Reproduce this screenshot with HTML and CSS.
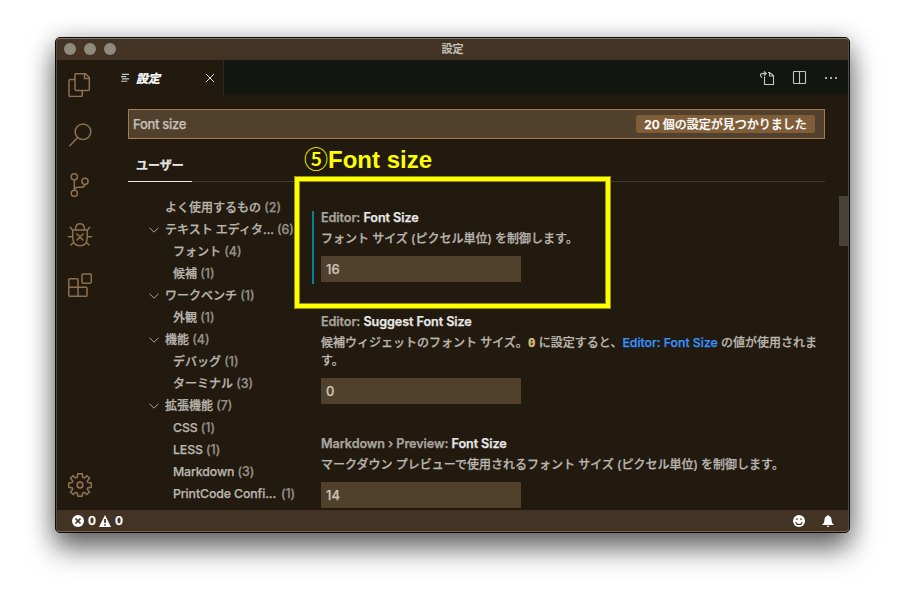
FILE: index.html
```html
<!DOCTYPE html>
<html lang="ja">
<head>
<meta charset="utf-8">
<title>設定</title>
<link rel="stylesheet" href="styles.css">
</head>
<body>
<div class="window">
  <header class="titlebar">
    <div class="lights"><i></i><i></i><i></i></div>
    <span class="title">設定</span>
  </header>
  <div class="workbench">
    <nav class="activity">
      <svg viewBox="0 0 24 24"><path d="M6.5 6.5H2.2Q1 6.500 1 7.700V22.300Q1 23.500 2.200 23.500H13Q14.300 23.500 14.300 22.300V17.800M8.200 .7H17.500L21.300 4.500V16.300Q21.300 17.500 20.100 17.500H8.200Q7 17.500 7 16.300V1.900Q7 .7 8.200 .7ZM16.500 .7V5.500H21.300"/></svg>
      <svg viewBox="0 0 24 24"><circle cx="15" cy="8.700" r="7.800"/><path d="M9.700 14.500L1.300 23.300"/></svg>
      <svg viewBox="0 0 24 24"><circle cx="6.300" cy="3.800" r="3.100"/><circle cx="6.300" cy="20.300" r="3.100"/><circle cx="17" cy="8.300" r="3.100"/><path d="M6.300 7V17.200M17 11.500Q16.500 14.300 13 14.300H10Q6.800 14.300 6.400 17"/></svg>
      <svg viewBox="0 0 24 24"><path d="M4.700 7H19.300V14Q19.300 22.800 12 22.800T4.700 14ZM7.600 7V5.500Q7.800 .8 12 .8T16.400 5.500V7M4.500 7L2 3.700M19.500 7L22 3.700M4.700 13.700H0M19.300 13.700H24M6 19L2.500 22.500M18 19L21.500 22.500M8.500 10.500L15.500 17.500M15.500 10.500L8.500 17.500"/></svg>
      <svg viewBox="0 0 24 24"><path d="M2 5.700H9Q10 5.700 10 6.700V14.300H18Q19 14.300 19 15.300V22.300Q19 23.300 18 23.300H2Q.8 23.300 .8 22.300V6.700Q.8 5.700 2 5.700ZM.8 14.300H10V23.300"/><rect x="14" y=".9" width="9.300" height="9.300" rx="1.200"/></svg>
      <svg class="gear" viewBox="0 0 24 24"><circle cx="12" cy="12" r="2.900"/><path d="M9.800 .8H14.200L14.700 4.200L16.300 4.900L19 2.800L21.500 5.300L19.300 8L20 9.500L23.300 10V14.200L20 14.700L19.300 16.200L21.400 18.900L18.800 21.500L16.200 19.400L14.600 20L14.200 23.300H9.800L9.400 20L7.800 19.400L5.200 21.500L2.600 18.900L4.700 16.200L4 14.700L.7 14.200V10L4 9.500L4.700 8L2.500 5.300L5 2.800L7.700 4.900L9.300 4.200Z"/></svg>
    </nav>
    <main class="main">
      <div class="tabs">
        <div class="tab">
          <svg class="lines" viewBox="0 0 10 10"><path d="M1 1H9M0 3.500H6M1 6H9M0 8.700H7"/></svg>
          <span class="tabname">設定</span>
          <svg class="close" viewBox="0 0 10 10"><path d="M1 1L9 9M9 1L1 9"/></svg>
        </div>
        <div class="actions">
          <svg viewBox="0 0 16 16"><path d="M5.500 6.500V14.500H14.500V5.500L10.500 2.500H9M10.500 2.500V6H14.500M3 7.500Q.5 5.500 2 4Q3 3 6.500 3.500M5 1.300L7.300 3.500L4.800 5.500"/></svg>
          <svg viewBox="0 0 16 16"><rect x="2.500" y="1.500" width="12" height="12" rx=".6"/><path d="M8.500 1.500V13.500"/></svg>
          <svg viewBox="0 0 16 16"><path class="dots" d="M2 7h2v2H2zM7 7h2v2H7zM12 7h2v2h-2z"/></svg>
        </div>
      </div>
      <div class="editor">
        <div class="search"><span class="query">Font size</span><span class="found"><b>20</b> 個の設定が見つかりました</span></div>
        <div class="scopes"><span class="scope">ユーザー</span></div>
        <div class="content">
          <ul class="toc">
            <li>よく使用するもの <em>(2)</em></li>
            <li class="open"><svg viewBox="0 0 10 6"><path d="M.5 .7L5 5.200L9.500 .7"/></svg>テキスト エディタ... <em>(6)</em></li>
            <li class="sub">フォント <em>(4)</em></li>
            <li class="sub">候補 <em>(1)</em></li>
            <li class="open"><svg viewBox="0 0 10 6"><path d="M.5 .7L5 5.200L9.500 .7"/></svg>ワークベンチ <em>(1)</em></li>
            <li class="sub">外観 <em>(1)</em></li>
            <li class="open"><svg viewBox="0 0 10 6"><path d="M.5 .7L5 5.200L9.500 .7"/></svg>機能 <em>(4)</em></li>
            <li class="sub">デバッグ <em>(1)</em></li>
            <li class="sub">ターミナル <em>(3)</em></li>
            <li class="open"><svg viewBox="0 0 10 6"><path d="M.5 .7L5 5.200L9.500 .7"/></svg>拡張機能 <em>(7)</em></li>
            <li class="sub latin">CSS <em>(1)</em></li>
            <li class="sub latin">LESS <em>(1)</em></li>
            <li class="sub latin">Markdown <em>(3)</em></li>
            <li class="sub latin clipped"><span>PrintCode Confi...</span> <em>(1)</em></li>
          </ul>
          <div class="list">
            <section class="item modified">
              <h2>Editor: <b>Font Size</b></h2>
              <p>フォント サイズ (ピクセル単位) を制御します。</p>
              <div class="input">16</div>
            </section>
            <section class="item">
              <h2>Editor: <b>Suggest Font Size</b></h2>
              <p>候補ウィジェットのフォント サイズ。<code>0</code> に設定すると、<a>Editor: Font Size</a> の値が使用されま<br>す。</p>
              <div class="input">0</div>
            </section>
            <section class="item">
              <h2>Markdown › Preview: <b>Font Size</b></h2>
              <p>マークダウン プレビューで使用されるフォント サイズ (ピクセル単位) を制御します。</p>
              <div class="input">14</div>
            </section>
          </div>
        </div>
      </div>
      <div class="thumb"></div>
    </main>
  </div>
  <footer class="status">
    <svg viewBox="0 0 12 12"><circle cx="6" cy="6" r="6"/><path class="cut" d="M3.500 3.500L8.500 8.500M8.500 3.500L3.500 8.500"/></svg><span>0</span>
    <svg viewBox="0 0 12 12"><path d="M6 0L12 12H0Z"/><path class="cut" d="M6 4V8M6 9.200V10.700"/></svg><span>0</span>
    <svg class="smile" viewBox="0 0 12 12"><circle cx="6" cy="6" r="6"/><path class="cut thin" d="M4 3.200V5M8 3.200V5M2.700 7.200Q3.500 9.500 6 9.500T9.300 7.200"/></svg>
    <svg class="bell" viewBox="0 0 12 12"><path d="M6 0Q6.700 0 6.900 1Q9.500 1.800 9.500 5Q9.500 8 11.700 9.500V10H.3V9.500Q2.500 8 2.500 5Q2.500 1.800 5.100 1Q5.300 0 6 0ZM4.500 10.800H7.500Q7 12 6 12T4.500 10.800Z"/></svg>
  </footer>
</div>
<div class="callout"></div>
<div class="callout-label"><span>⑤</span>Font size</div>
</body>
</html>
```
FILE: styles.css
```css
* { box-sizing: border-box; }
body {
  margin: 0;
  width: 905px;
  height: 606px;
  padding: 37px 0 0 55px;
  overflow: hidden;
  background: #fff;
  font: 500 12px/18px Inter, "Noto Sans CJK JP", sans-serif;
  -webkit-text-stroke: .25px currentColor;
  color: #b9b5ae;
  white-space: nowrap;
}
svg { display: block; fill: none; stroke: currentColor; flex: none; }
.window {
  position: relative;
  display: flex;
  flex-direction: column;
  width: 795px;
  height: 496px;
  border: 1px solid #0b0a08;
  border-radius: 5px;
  background: #221a0f;
  box-shadow: 0 16px 28px rgba(0,0,0,.55), 0 2px 24px rgba(0,0,0,.24);
}
.window::after {
  content: "";
  position: absolute;
  inset: 0;
  border: 1px solid #564c3f;
  border-top-color: #82796d;
  border-bottom-color: #75664f;
  border-radius: 4px;
}
.titlebar {
  display: grid;
  grid-template-columns: 100px 1fr 100px;
  align-items: center;
  height: 22px;
  background: #423325;
  border-radius: 4px 4px 0 0;
}
.lights { display: flex; gap: 8px; padding-left: 8px; }
.lights i { width: 12px; height: 12px; border-radius: 50%; background: #91887e; }
.title { text-align: center; font-size: 11px; color: #c8c2ba; }
.workbench { display: flex; height: 450px; }
.activity {
  display: flex;
  flex-direction: column;
  align-items: center;
  gap: 26px;
  width: 48px;
  padding: 13px 0;
  color: #8c7050;
}
.activity svg { width: 24px; height: 24px; stroke-width: 1.5; }
.activity .gear { margin-top: auto; stroke-width: 1.6; }
.main { position: relative; flex: 1; display: flex; flex-direction: column; min-width: 0; }
.tabs { display: flex; height: 35px; background: #131510; }
.tab {
  display: flex;
  align-items: center;
  width: 120px;
  padding: 2px 8px 0 17px;
  background: #221a0f;
  border-right: 1px solid #252b2b;
}
.lines { width: 9px; height: 10px; margin-bottom: 2px; color: #c5c5c5; stroke-width: 1.2; }
.tabname { margin-left: 6px; font-size: 12px; font-weight: 700; font-style: italic; color: #fff; }
.close { width: 10px; height: 10px; margin: 0 0 2px auto; color: #ddd; }
.actions { display: flex; align-items: center; gap: 16px; margin-left: auto; padding-right: 10px; color: #c5c5c5; }
.actions svg { width: 16px; height: 16px; stroke-width: 1.1; }
.dots { fill: #a9aaa7; stroke: none; }
.editor { display: flex; flex-direction: column; flex: 1; min-height: 0; padding: 14px 24px 0; }
.search {
  display: flex;
  align-items: center;
  justify-content: space-between;
  flex: none;
  height: 30px;
  padding: 0 9px 0 4px;
  border: 1px solid #a57a4c;
  background: #51412c;
}
.query { margin-top: -1px; font-size: 13px; letter-spacing: -.3px; color: #c5c0b8; }
.found {
  width: 179px;
  height: 18px;
  border-radius: 2px;
  background: #7f5d38;
  text-align: center;
  line-height: 19px;
  color: #fff;
}
.found b { font-weight: 600; font-size: 12px; }
.scopes { flex: none; height: 43px; border-bottom: 1px solid #3b3a37; }
.scope {
  display: block;
  width: 64px;
  height: 43px;
  padding-top: 18px;
  border-bottom: 1px solid #e7e7e7;
  text-align: center;
  font-weight: 700;
  color: #e7e7e7;
}
.content { display: flex; flex: 1; min-height: 0; overflow: hidden; }
.toc { flex: none; width: 181px; margin: 0; padding: 15px 0 0 37px; list-style: none; }
.toc li { position: relative; height: 22px; line-height: 22px; }
.toc .sub { padding-left: 8px; }
.toc .latin { font-size: 12.3px; letter-spacing: -.1px; }
.toc .clipped { display: flex; justify-content: space-between; padding-right: 14px; }
.toc em { font-style: normal; font-size: 12.4px; color: #96918a; }
.toc svg { position: absolute; left: -16px; top: 8px; width: 10px; height: 6px; stroke-width: 1; color: #a9a49b; }
.list { flex: 1; display: flex; flex-direction: column; gap: 29px; min-width: 0; padding: 25px 0 0 12px; }
.item { position: relative; flex: none; }
.modified::before { content: ""; position: absolute; left: -9px; top: 4px; width: 2px; height: 73px; background: #0c7d9d; }
.item h2 { margin: 0; padding-top: 1px; font-size: 12.6px; line-height: 20px; font-weight: 600; letter-spacing: -.07px; color: #a9a59e; }
.item h2 b { font-weight: 600; color: #e7e7e7; }
.item p { margin: 2px 0 8px; }
.item code { font: 700 13px/12px "DejaVu Sans Mono", monospace; color: #d7ba7d; }
.item a { font-size: 12.3px; color: #3794ff; }
.input { width: 200px; height: 26px; padding-left: 5px; background: #51412c; font-size: 13px; line-height: 26px; color: #c9c5bd; }
.thumb { position: absolute; right: 0; top: 136px; width: 10px; height: 50px; background: #48413a; }
.status {
  display: flex;
  align-items: center;
  height: 22px;
  padding: 0 15px 1px 16px;
  border-radius: 0 0 4px 4px;
  background: #423325;
  color: #fff;
}
.status svg { width: 12px; height: 12px; fill: #fff; stroke: none; }
.status .cut { fill: none; stroke: #423325; stroke-width: 1.7; }
.status .thin { stroke-width: 1.2; }
.status span { margin: 0 4px; width: 7px; font-weight: 600; }
.status .smile { margin-left: auto; }
.status .bell { margin-left: 17px; }
.callout {
  position: absolute;
  left: 295px;
  top: 177px;
  width: 315px;
  height: 131px;
  border: 4px solid #ff0;
  box-shadow: 0 0 0 1px #90900a, inset 0 0 0 1px #90900a;
}
.callout-label {
  position: absolute;
  left: 304px;
  top: 144px;
  font: 700 24px/28px "Liberation Sans", "Noto Sans CJK JP", sans-serif;
  -webkit-text-stroke: 0;
  color: #ff0;
}
.callout-label span { font-family: "Noto Sans CJK JP", sans-serif; font-weight: 500; }
```
